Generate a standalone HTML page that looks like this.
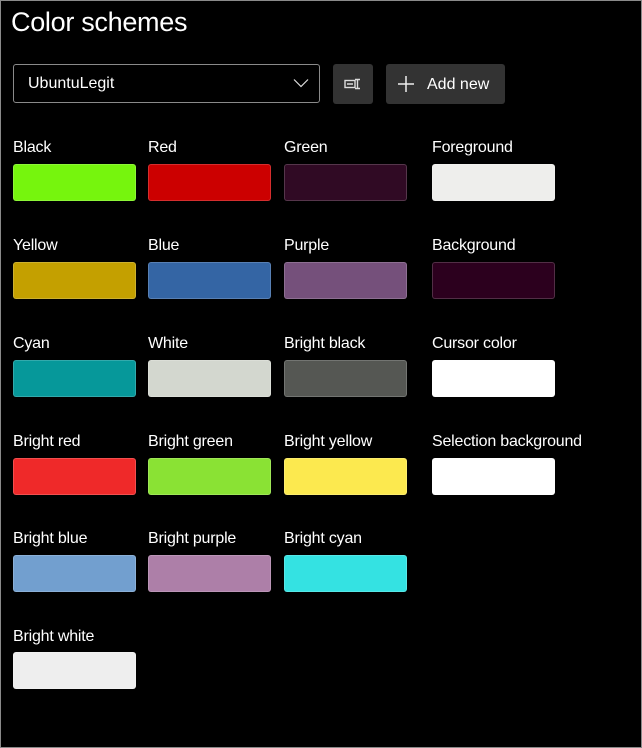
<!DOCTYPE html>
<html><head><style>
html,body{margin:0;padding:0;background:#000;}
body{width:642px;height:748px;position:relative;overflow:hidden;font-family:"Liberation Sans",sans-serif;color:#fff;}
.frame{position:absolute;left:0;top:0;width:640px;height:746px;border:1px solid #8a8a8a;}
h1{position:absolute;left:11px;top:7px;margin:0;font-weight:normal;font-size:27px;letter-spacing:-0.3px;}
.dd{position:absolute;left:13px;top:64px;width:305px;height:37px;border:1px solid #8a8a8a;border-radius:3px;background:#000;}
.dd span{position:absolute;left:14px;top:10px;font-size:16px;}
.dd svg{position:absolute;right:10px;top:13px;}
.btn{position:absolute;top:64px;height:40px;background:#333;border-radius:3px;}
.lbl{position:absolute;font-size:16px;letter-spacing:-0.2px;}
.sw{position:absolute;width:123px;height:37px;border-radius:3px;box-sizing:border-box;border:1px solid rgba(255,255,255,0.18);}
</style></head><body>
<div class="frame"></div>
<h1>Color schemes</h1>
<div class="dd"><span>UbuntuLegit</span><svg width="16" height="10" viewBox="0 0 16 10"><path d="M1 1.5 L8 8.5 L15 1.5" fill="none" stroke="#ddd" stroke-width="1.2"/></svg></div>
<div class="btn" style="left:333px;width:40px;"><svg width="40" height="40" viewBox="0 0 40 40"><rect x="12" y="16.5" width="10" height="7" fill="none" stroke="#ddd" stroke-width="1.4"/><path d="M14 20h6M22 15.5h5M24.5 15.5v9M22 24.5h5" stroke="#ddd" stroke-width="1.4" fill="none"/></svg></div>
<div class="btn" style="left:386px;width:119px;"><svg style="position:absolute;left:10px;top:10px" width="20" height="20" viewBox="0 0 20 20"><path d="M10 2v16M2 10h16" stroke="#eee" stroke-width="1.5"/></svg><span style="position:absolute;left:41px;top:12px;font-size:16px;">Add new</span></div>

<div class="lbl" style="left:13px;top:139px">Black</div><div class="sw" style="left:13px;top:164px;background:#76f50d"></div>
<div class="lbl" style="left:148px;top:139px">Red</div><div class="sw" style="left:148px;top:164px;background:#cc0000"></div>
<div class="lbl" style="left:284px;top:139px">Green</div><div class="sw" style="left:284px;top:164px;background:#300a24"></div>
<div class="lbl" style="left:432px;top:139px">Foreground</div><div class="sw" style="left:432px;top:164px;background:#eeeeec"></div>

<div class="lbl" style="left:13px;top:237px">Yellow</div><div class="sw" style="left:13px;top:262px;background:#c4a000"></div>
<div class="lbl" style="left:148px;top:237px">Blue</div><div class="sw" style="left:148px;top:262px;background:#3465a4"></div>
<div class="lbl" style="left:284px;top:237px">Purple</div><div class="sw" style="left:284px;top:262px;background:#75507b"></div>
<div class="lbl" style="left:432px;top:237px">Background</div><div class="sw" style="left:432px;top:262px;background:#2c001e"></div>

<div class="lbl" style="left:13px;top:335px">Cyan</div><div class="sw" style="left:13px;top:360px;background:#06989a"></div>
<div class="lbl" style="left:148px;top:335px">White</div><div class="sw" style="left:148px;top:360px;background:#d3d7cf"></div>
<div class="lbl" style="left:284px;top:335px">Bright black</div><div class="sw" style="left:284px;top:360px;background:#555753"></div>
<div class="lbl" style="left:432px;top:335px">Cursor color</div><div class="sw" style="left:432px;top:360px;background:#ffffff"></div>

<div class="lbl" style="left:13px;top:433px">Bright red</div><div class="sw" style="left:13px;top:458px;background:#ef2929"></div>
<div class="lbl" style="left:148px;top:433px">Bright green</div><div class="sw" style="left:148px;top:458px;background:#8ae234"></div>
<div class="lbl" style="left:284px;top:433px">Bright yellow</div><div class="sw" style="left:284px;top:458px;background:#fce94f"></div>
<div class="lbl" style="left:432px;top:433px">Selection background</div><div class="sw" style="left:432px;top:458px;background:#ffffff"></div>

<div class="lbl" style="left:13px;top:530px">Bright blue</div><div class="sw" style="left:13px;top:555px;background:#729fcf"></div>
<div class="lbl" style="left:148px;top:530px">Bright purple</div><div class="sw" style="left:148px;top:555px;background:#ad7fa8"></div>
<div class="lbl" style="left:284px;top:530px">Bright cyan</div><div class="sw" style="left:284px;top:555px;background:#34e2e2"></div>

<div class="lbl" style="left:13px;top:628px">Bright white</div><div class="sw" style="left:13px;top:652px;background:#eeeeee"></div>
</body></html>
